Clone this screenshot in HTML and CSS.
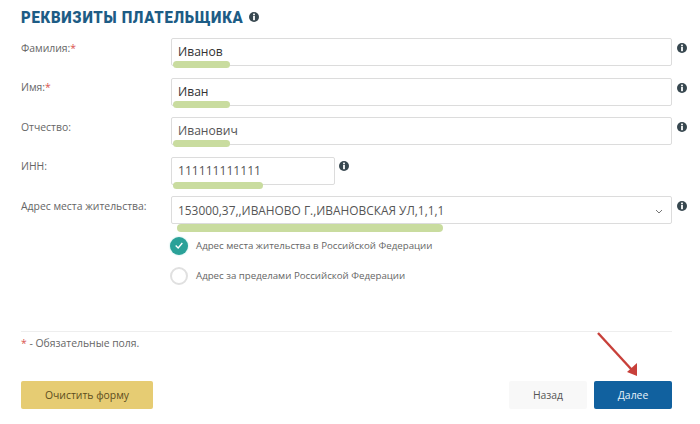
FILE: index.html
```html
<!DOCTYPE html>
<html lang="ru">
<head>
    <meta charset="UTF-8">
    <meta name="viewport" content="width=device-width, initial-scale=1.0">
    <title>Реквизиты плательщика</title>
    <link rel="stylesheet" href="styles.css">
</head>
<body>
    <svg class="icon-defs" width="0" height="0">
        <symbol id="info" viewBox="0 0 10 10">
            <circle cx="5" cy="5" r="5" fill="#37474f"/>
            <rect x="4.1" y="1.6" width="1.8" height="1.7" fill="#fff"/>
            <rect x="4.1" y="4" width="1.8" height="4.2" fill="#fff"/>
        </symbol>
    </svg>
    <div class="page">
        <h2 class="title"><span class="title-text">РЕКВИЗИТЫ ПЛАТЕЛЬЩИКА</span> <svg class="info title-info"><use href="#info"/></svg></h2>

        <div class="row">
            <label class="row-label">Фамилия:<span class="req">*</span></label>
            <div class="field">Иванов<span class="mark mark-1"></span></div>
            <svg class="info"><use href="#info"/></svg>
        </div>
        <div class="row">
            <label class="row-label">Имя:<span class="req">*</span></label>
            <div class="field">Иван<span class="mark mark-1"></span></div>
            <svg class="info"><use href="#info"/></svg>
        </div>
        <div class="row">
            <label class="row-label">Отчество:</label>
            <div class="field muted">Иванович<span class="mark mark-1"></span></div>
            <svg class="info"><use href="#info"/></svg>
        </div>
        <div class="row row-short">
            <label class="row-label">ИНН:</label>
            <div class="field muted">111111111111<span class="mark mark-2"></span></div>
            <svg class="info"><use href="#info"/></svg>
        </div>
        <div class="row">
            <label class="row-label">Адрес места жительства:</label>
            <div class="field muted field-select">
                153000,37,,ИВАНОВО Г.,ИВАНОВСКАЯ УЛ,1,1,1
                <svg class="chevron" viewBox="0 0 8 5"><path d="M1 1l3 3 3-3" fill="none" stroke="#777" stroke-width="1"/></svg>
                <span class="mark mark-3"></span>
            </div>
            <svg class="info"><use href="#info"/></svg>
        </div>

        <div class="radios">
            <div class="radio-row">
                <span class="radio checked">
                    <svg viewBox="0 0 12 10"><path d="M2 5l3 3 5-6" fill="none" stroke="#fff" stroke-width="1.6"/></svg>
                </span>
                Адрес места жительства в Российской Федерации
            </div>
            <div class="radio-row">
                <span class="radio"></span>
                Адрес за пределами Российской Федерации
            </div>
        </div>

        <div class="note"><span class="req">*</span> - Обязательные поля.</div>

        <div class="actions">
            <button class="btn btn-clear">Очистить форму</button>
            <div class="actions-right">
                <button class="btn btn-back">Назад</button>
                <button class="btn btn-next">Далее</button>
            </div>
        </div>
    </div>

    <svg class="arrow" width="50" height="56" viewBox="0 0 50 56">
        <path d="M1 1L35 38" stroke="#c8403a" stroke-width="2.4" fill="none"/>
        <path d="M40 44L30 40L40 31Z" fill="#c8403a"/>
    </svg>
</body>
</html>
```

FILE: styles.css
```css
body {
    margin: 0;
    background-color: #ffffff;
    font-family: "Open Sans", Arial, sans-serif;
    color: #444;
}
.icon-defs {
    position: absolute;
}
.page {
    width: 700px;
    height: 424px;
    box-sizing: border-box;
    padding: 6px 28px 0 21px;
}
.title {
    margin: 0 0 11px;
    height: 21px;
    display: flex;
    align-items: center;
    gap: 5px;
    font-family: "Roboto", Arial, sans-serif;
    font-size: 17px;
    font-weight: 900;
    letter-spacing: 0.8px;
    color: #1d5c85;
}
/* the original heading font is condensed, none is installed */
.title-text {
    transform: scaleX(0.88);
    transform-origin: left center;
    margin-right: -30px;
}
.row {
    display: grid;
    grid-template-columns: 150px 1fr;
    position: relative;
    margin-bottom: 11.5px;
}
.row-short {
    grid-template-columns: 150px 164px;
}
.row-label {
    padding-top: 2.5px;
    font-size: 10.4px;
    line-height: 15px;
    color: #666;
}
.req {
    color: #d9534f;
}
.field {
    position: relative;
    height: 28px;
    box-sizing: border-box;
    padding: 0 6px;
    border: 1px solid #dcdcdc;
    border-radius: 2px;
    font-size: 12.1px;
    line-height: 26px;
    color: #333;
}
.muted {
    color: #555;
}
.field-select {
    font-size: 11.9px;
}
.chevron {
    position: absolute;
    right: 8px;
    top: 12px;
    width: 8px;
    height: 5px;
}
.info {
    width: 10px;
    height: 10px;
    position: absolute;
    right: -15px;
    top: 5px;
}
.row-short .info {
    right: auto;
    left: 318px;
    top: 4px;
}
.title-info {
    position: static;
}
.mark {
    position: absolute;
    height: 7px;
    border-radius: 4px;
    background-color: #c9dc9f;
}
.mark-1 {
    left: 1px;
    width: 57px;
    top: 22px;
}
.mark-2 {
    left: 1px;
    width: 90px;
    top: 24px;
}
.mark-3 {
    left: 5px;
    width: 266px;
    top: 27px;
    height: 8px;
}
.radios {
    margin-left: 149px;
    padding-top: 1px;
}
.radio-row {
    display: flex;
    align-items: center;
    gap: 8px;
    height: 18px;
    margin-bottom: 12px;
    font-size: 9.7px;
    color: #666;
}
.radio {
    width: 18px;
    height: 18px;
    box-sizing: border-box;
    border: 2px solid #e0e0e0;
    border-radius: 50%;
    display: flex;
    align-items: center;
    justify-content: center;
}
.radio svg {
    width: 10px;
    height: 9px;
}
.radio.checked {
    border: none;
    background-color: #2aa198;
    box-shadow: 0 0 2px #a8e0dc;
}
.note {
    margin-top: 46px;
    padding-top: 4px;
    height: 40px;
    border-top: 1px solid #eeeeee;
    font-size: 10.4px;
    line-height: 15px;
    color: #666;
}
.actions {
    display: flex;
    justify-content: space-between;
    margin-top: 5px;
}
.actions-right {
    display: flex;
    gap: 7px;
}
.btn {
    height: 28px;
    border: none;
    border-radius: 2px;
    font-family: "Open Sans", Arial, sans-serif;
    font-size: 10.4px;
    cursor: pointer;
}
.btn-clear {
    width: 132px;
    background-color: #e6cc73;
    color: #5c4c20;
}
.btn-back {
    width: 78px;
    background-color: #f8f8f8;
    color: #555;
}
.btn-next {
    width: 78px;
    background-color: #11619f;
    color: #e8f2fa;
}
.arrow {
    position: absolute;
    left: 597px;
    top: 332px;
}
```
